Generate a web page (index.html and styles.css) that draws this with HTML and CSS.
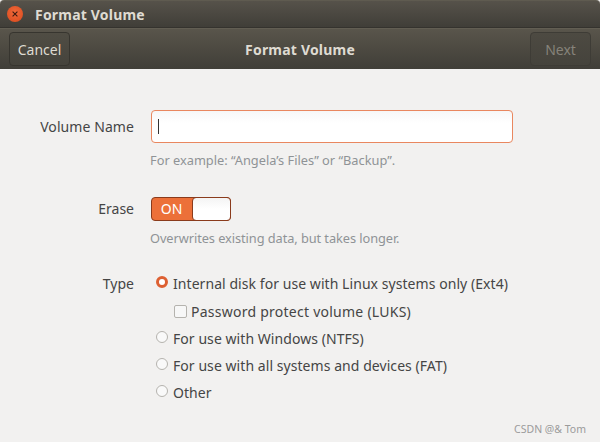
FILE: index.html
```html
<!DOCTYPE html>
<html lang="en">
<head>
<meta charset="utf-8">
<title>Format Volume</title>
<link rel="stylesheet" href="styles.css">
</head>
<body>
<div class="window">
  <div class="titlebar">
    <span class="close"><svg width="16" height="16" viewBox="0 0 16 16"><path d="M5.6 5.6l4.8 4.8M10.4 5.6l-4.8 4.8" stroke="#3a1a10" stroke-width="1.1" fill="none"/></svg></span>
    <span class="title">Format Volume</span>
  </div>
  <div class="headerbar">
    <button class="btn">Cancel</button>
    <span class="title">Format Volume</span>
    <button class="btn disabled">Next</button>
  </div>
  <main class="form">
    <div class="label name-label">Volume Name</div>
    <div class="field name-field">
      <div class="entry"><span class="caret"></span></div>
      <div class="hint">For example: “Angela’s Files” or “Backup”.</div>
    </div>
    <div class="label erase-label">Erase</div>
    <div class="field erase-field">
      <div class="switch"><span class="on">ON</span><span class="knob"></span></div>
      <div class="hint tight">Overwrites existing data, but takes longer.</div>
    </div>
    <div class="label type-label">Type</div>
    <div class="options">
      <div class="opt"><span class="radio checked"></span>Internal disk for use with Linux systems only (Ext4)</div>
      <div class="opt sub"><span class="check"></span>Password protect volume (LUKS)</div>
      <div class="opt"><span class="radio"></span>For use with Windows (NTFS)</div>
      <div class="opt"><span class="radio"></span>For use with all systems and devices (FAT)</div>
      <div class="opt"><span class="radio"></span>Other</div>
    </div>
  </main>
  <div class="watermark">CSDN @&amp; Tom</div>
</div>
</body>
</html>
```
FILE: styles.css
```css
* { box-sizing: border-box; }
html, body { margin: 0; padding: 0; }
body { width: 600px; height: 442px; overflow: hidden; background: #f2f1f0; font-family: "Noto Sans", "Open Sans", sans-serif; font-size: 14px; color: #454545; }
.window { position: relative; width: 600px; height: 442px; display: flex; flex-direction: column; background: #f2f1f0; }
.titlebar { height: 28px; flex: none; display: flex; align-items: center; gap: 12px; padding-left: 7px; background: linear-gradient(#56524a, #403e38); border-top: 1px solid #5f5b50; border-bottom: 1px solid #35332e; border-radius: 4px 4px 0 0; }
.close { width: 16px; height: 16px; border-radius: 50%; background: radial-gradient(circle at 50% 40%, #f0693a, #d9491c); display: block; line-height: 0; }
.title { color: #dfdbd2; font-weight: 700; font-size: 14px; letter-spacing: .2px; }
.headerbar { height: 41px; flex: none; display: flex; align-items: center; justify-content: space-between; padding: 3px 9px; background: linear-gradient(#59554b, #403e38); border-top: 1px solid #625e53; }
.btn { width: 61px; height: 34px; padding: 0; font: inherit; font-size: 14px; color: #dfdbd2; background: linear-gradient(#504d44, #45433c); border: 1px solid #37352f; border-radius: 4px; }
.btn.disabled { color: #86837a; background: linear-gradient(#4d4a42, #45433c); border-color: #3e3c36; }
.form { display: grid; grid-template-columns: 134px 362px; column-gap: 17px; padding-top: 41px; align-items: start; }
.label { text-align: right; line-height: 20px; white-space: nowrap; }
.name-label { margin-top: 7px; letter-spacing: .08px; }
.erase-label { margin-top: 2px; }
.type-label { margin-top: 3.6px; }
.field { display: flex; flex-direction: column; }
.name-field { padding-bottom: 28px; }
.erase-field { padding-bottom: 23.4px; }
.entry { height: 33px; background: linear-gradient(#f7f7f7, #fff 40%); border: 1px solid #e9875f; border-radius: 4px; display: flex; align-items: center; padding-left: 6px; }
.caret { width: 1px; height: 15px; background: #333; }
.hint { color: #8f9396; font-size: 12.8px; line-height: 17px; margin-top: 9px; margin-left: -1px; }
.hint.tight { letter-spacing: -.07px; }
.switch { width: 80px; height: 24px; display: flex; border: 1px solid #8a3b1c; border-radius: 4px; background: #ec7039; }
.on { width: 40px; padding-right: 1px; text-align: center; color: #fff; font-size: 14px; line-height: 22px; }
.knob { flex: 1; background: linear-gradient(#f4f4f4, #fff 50%); border-radius: 4px; margin: -1px -1px -1px 0; border: 1px solid #8a3b1c; }
.options { display: flex; flex-direction: column; margin-left: 5px; }
.opt { height: 27.2px; display: flex; align-items: center; white-space: nowrap; gap: 5px; letter-spacing: .06px; }
.opt.sub { padding-left: 18px; gap: 4px; letter-spacing: .25px; }
.radio { width: 12px; height: 12px; flex: none; border-radius: 50%; background: #f9f9f9; border: 1px solid #b5b3ae; margin-top: -3px; }
.radio.checked { background: #fff; border: 3.5px solid #dd6032; }
.check { width: 13px; height: 13px; flex: none; border-radius: 2px; background: #f7f7f7; border: 1px solid #b5b3ae; }
.watermark { position: absolute; right: 14px; bottom: 6px; color: #9b9b9b; font-size: 10.5px; }
```
